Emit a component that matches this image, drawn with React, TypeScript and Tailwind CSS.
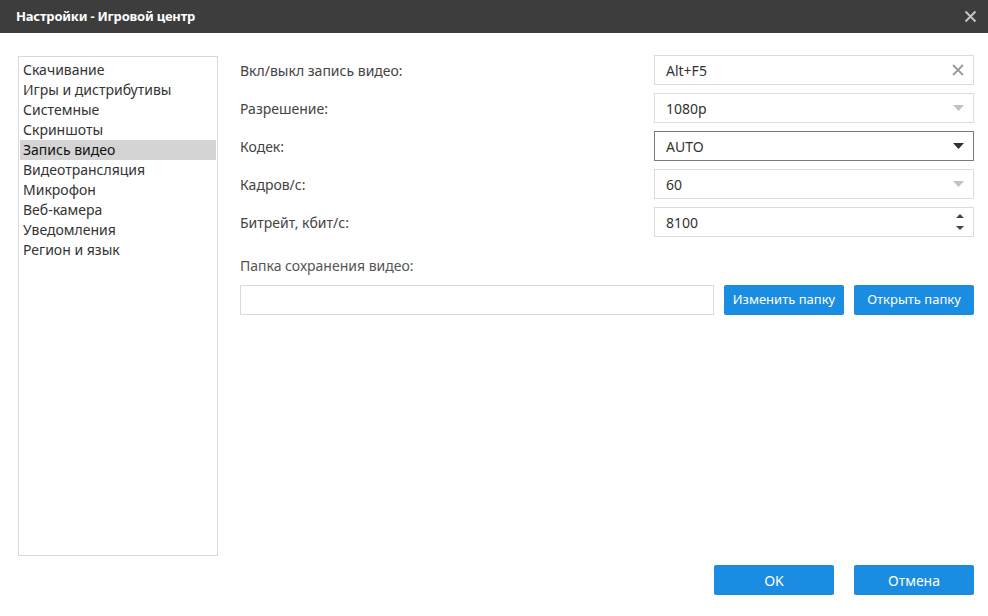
import React from "react";

const menu = [
  "Скачивание",
  "Игры и дистрибутивы",
  "Системные",
  "Скриншоты",
  "Запись видео",
  "Видеотрансляция",
  "Микрофон",
  "Веб-камера",
  "Уведомления",
  "Регион и язык",
];

function Caret({ color }: { color: string }) {
  return (
    <svg width="11" height="6" viewBox="0 0 11 6">
      <path d="M0 0 L11 0 L5.5 6 Z" fill={color} />
    </svg>
  );
}

export default function App() {
  return (
    <div className="w-[988px] h-[616px] bg-white flex flex-col overflow-hidden text-[14px] text-[#333333] font-['Noto_Sans','DejaVu_Sans',sans-serif]">
      <div className="h-[33px] bg-[#3d3d3d] flex items-center justify-between pl-[16px] pr-[6px] shrink-0">
        <span className="text-white font-bold text-[13px] tracking-[-0.2px]">Настройки - Игровой центр</span>
        <svg width="13" height="13" viewBox="0 0 13 13" className="mr-[5px]">
          <path d="M1.5 1.5 L11.5 11.5 M11.5 1.5 L1.5 11.5" stroke="#c4c4c4" strokeWidth="2" />
        </svg>
      </div>
      <div className="flex flex-1 pt-[23px] pl-[18px] pr-[14px] pb-[21px] gap-[22px]">
        <div className="flex flex-col">
          <div className="w-[200px] h-[500px] border border-[#d9d9d9] pt-[3px] px-[1px]">
            {menu.map((m) => (
              <div
                key={m}
                className={
                  "h-[20px] leading-[20px] pl-[3px] " +
                  (m === "Запись видео" ? "bg-[#d4d4d4] text-[#111111]" : "")
                }
              >
                {m}
              </div>
            ))}
          </div>
        </div>
        <div className="flex-1 flex flex-col">
          <div className="flex flex-col gap-[8px] mt-[-1px]">
            <Row label="Вкл/выкл запись видео:">
              <Field value="Alt+F5">
                <svg width="12" height="12" viewBox="0 0 12 12">
                  <path d="M1 1 L11 11 M11 1 L1 11" stroke="#9a9a9a" strokeWidth="1.8" />
                </svg>
              </Field>
            </Row>
            <Row label="Разрешение:">
              <Field value="1080p">
                <Caret color="#c2c2c2" />
              </Field>
            </Row>
            <Row label="Кодек:">
              <Field value="AUTO" dark>
                <Caret color="#333333" />
              </Field>
            </Row>
            <Row label="Кадров/с:">
              <Field value="60">
                <Caret color="#c2c2c2" />
              </Field>
            </Row>
            <Row label="Битрейт, кбит/с:">
              <Field value="8100">
                <div className="flex flex-col gap-[8px] items-center">
                  <svg width="8" height="4" viewBox="0 0 8 4">
                    <path d="M0 4 L8 4 L4 0 Z" fill="#444444" />
                  </svg>
                  <svg width="8" height="4" viewBox="0 0 8 4">
                    <path d="M0 0 L8 0 L4 4 Z" fill="#444444" />
                  </svg>
                </div>
              </Field>
            </Row>
          </div>
          <div className="mt-[19px] text-[#555555] leading-[20px]">Папка сохранения видео:</div>
          <div className="mt-[9px] flex gap-[10px]">
            <div className="flex-1 h-[30px] border border-[#d9d9d9]" />
            <button className="w-[120px] h-[30px] bg-[#1a8ce2] text-white rounded-[2px] text-[13px]">Изменить папку</button>
            <button className="w-[120px] h-[30px] bg-[#1a8ce2] text-white rounded-[2px] text-[13px]">Открыть папку</button>
          </div>
          <div className="flex-1" />
          <div className="flex justify-end gap-[20px]">
            <button className="w-[120px] h-[30px] bg-[#1a8ce2] text-white rounded-[2px] text-[14px]">OK</button>
            <button className="w-[120px] h-[30px] bg-[#1a8ce2] text-white rounded-[2px] text-[14px]">Отмена</button>
          </div>
        </div>
      </div>
    </div>
  );
}

function Row({ label, children }: { label: string; children: React.ReactNode }) {
  return (
    <div className="flex items-center justify-between h-[30px]">
      <span className="text-[#444444]">{label}</span>
      {children}
    </div>
  );
}

function Field({ value, dark, children }: { value: string; dark?: boolean; children: React.ReactNode }) {
  return (
    <div
      className={
        "w-[320px] h-[30px] border flex items-center justify-between pl-[11px] pr-[9px] text-[#333333] " +
        (dark ? "border-[#7a7a7a]" : "border-[#dcdcdc]")
      }
    >
      <span>{value}</span>
      {children}
    </div>
  );
}
